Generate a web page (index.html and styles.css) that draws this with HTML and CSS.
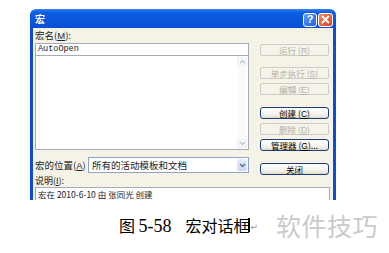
FILE: index.html
```html
<!DOCTYPE html>
<html lang="zh-CN">
<head>
    <meta charset="UTF-8">
    <meta name="viewport" content="width=device-width, initial-scale=1.0">
    <title>宏对话框</title>
    <link rel="stylesheet" href="styles.css">
</head>
<body>
    <div class="dialog">
        <div class="titlebar">
            <span class="title">宏</span>
            <div class="cap-btns">
                <span class="cap-btn help">?</span>
                <span class="cap-btn close">
                    <svg width="9" height="9" viewBox="0 0 9 9"><path d="M1.5 1.5 L7.5 7.5 M7.5 1.5 L1.5 7.5" stroke="#fff" stroke-width="1.8" stroke-linecap="round"/></svg>
                </span>
            </div>
        </div>
        <div class="client">
            <div class="main">
                <div class="left">
                    <div class="label">宏名(<u>M</u>):</div>
                    <div class="name-input">AutoOpen</div>
                    <div class="listbox">
                        <div class="scroll">
                            <span class="arr">
                                <svg width="7" height="5" viewBox="0 0 7 5"><path d="M1 4 L3.5 1.5 L6 4" fill="none" stroke="#b4bccb" stroke-width="1.2"/></svg>
                            </span>
                            <span class="arr">
                                <svg width="7" height="5" viewBox="0 0 7 5"><path d="M1 1 L3.5 3.5 L6 1" fill="none" stroke="#b4bccb" stroke-width="1.2"/></svg>
                            </span>
                        </div>
                    </div>
                    <div class="loc-row">
                        <span class="label">宏的位置(<u>A</u>)</span>
                        <div class="combo">
                            <span class="combo-text">所有的活动模板和文档</span>
                            <span class="combo-btn">
                                <svg width="7" height="5" viewBox="0 0 7 5"><path d="M1 1 L3.5 3.5 L6 1" fill="none" stroke="#4d6a9c" stroke-width="1.4"/></svg>
                            </span>
                        </div>
                    </div>
                </div>
                <div class="buttons">
                    <button class="btn off run">运行 (<u>R</u>)</button>
                    <button class="btn off step">单步执行 (<u>S</u>)</button>
                    <button class="btn off">编辑 (<u>E</u>)</button>
                    <button class="btn on create">创建 (<u>C</u>)</button>
                    <button class="btn off">删除 (<u>D</u>)</button>
                    <button class="btn on">管理器 (<u>G</u>)...</button>
                    <button class="btn on closebtn">关闭</button>
                </div>
            </div>
            <div class="label desc-label">说明(<u>I</u>):</div>
            <div class="desc">宏在 2010-6-10 由 张同光 创建</div>
        </div>
    </div>
    <div class="caption-line">
        <span class="fig">图 <span class="num">5-58</span></span>
        <span class="fig-title">宏对话框</span>
        <span class="cursor"></span>
        <span class="para">↵</span>
        <span class="watermark">软件技巧</span>
    </div>
</body>
</html>
```

FILE: styles.css
```css
* {
    margin: 0;
    padding: 0;
    box-sizing: border-box;
}
body {
    width: 389px;
    height: 253px;
    background-color: #fff;
    font-family: "Noto Sans CJK SC", "DejaVu Sans", sans-serif;
    overflow: hidden;
}
.dialog {
    margin: 9px 0 0 30px;
    width: 306px;
    height: 191px;
    overflow: hidden;
    display: flex;
    flex-direction: column;
}
.titlebar {
    height: 19px;
    flex-shrink: 0;
    display: flex;
    align-items: center;
    justify-content: space-between;
    padding: 0 3px 0 5px;
    border-radius: 6px 6px 0 0;
    background: linear-gradient(#3b86f5 0, #0d5fe3 3px, #0a57dc 55%, #0b4fcf 100%);
}
.title {
    color: #fff;
    font-size: 10px;
    font-weight: bold;
    line-height: 12px;
}
.cap-btns {
    display: flex;
    gap: 1px;
    padding-top: 2px;
}
.cap-btn {
    width: 14px;
    height: 14px;
    border: 1px solid #fff;
    border-radius: 3px;
    display: flex;
    align-items: center;
    justify-content: center;
    color: #fff;
}
.help {
    background: linear-gradient(135deg, #5c97f6, #2663de);
    font-family: "Liberation Sans", sans-serif;
    font-weight: bold;
    font-size: 11px;
    line-height: 1;
}
.close {
    width: 15px;
    background: linear-gradient(135deg, #f08a63, #d9461e);
}
.client {
    flex: 1;
    background-color: #f5f3e7;
    border-left: 3px solid #0b4ed6;
    border-right: 3px solid #0b4ed6;
    padding: 0 3px 0 2px;
    font-size: 9px;
    color: #222;
}
.label {
    height: 12px;
    line-height: 12px;
    margin-top: 1px;
    font-size: 9.5px;
    white-space: nowrap;
}
.label u, .btn u {
    font-family: "Liberation Sans", sans-serif;
}
.main {
    display: flex;
    gap: 11px;
}
.left {
    width: 214px;
    display: flex;
    flex-direction: column;
}
.name-input {
    margin-top: 2px;
    height: 13px;
    border: 1px solid #a5acb5;
    background: #fff;
    font-family: "Liberation Mono", monospace;
    font-size: 8.5px;
    line-height: 11px;
    padding-left: 2px;
}
.listbox {
    height: 94px;
    border: 1px solid #a5acb5;
    border-top: none;
    background: #fff;
    display: flex;
    justify-content: flex-end;
}
.scroll {
    width: 10px;
    margin: 1px 1px 1px 0;
    background: #fbfbf9;
    display: flex;
    flex-direction: column;
    justify-content: space-between;
}
.arr {
    height: 9px;
    display: flex;
    align-items: center;
    justify-content: center;
    border: 1px solid #eceef2;
    border-radius: 2px;
    background: #f7f8fb;
}
.loc-row {
    margin-top: 7px;
    display: flex;
    align-items: center;
    justify-content: space-between;
}
.loc-row .label {
    margin-top: 0;
}
.combo {
    width: 161px;
    height: 16px;
    border: 1px solid #8ea4c6;
    background: #fff;
    display: flex;
    align-items: center;
    justify-content: space-between;
    padding: 0 1px 0 3px;
}
.combo-text {
    font-size: 9.5px;
    line-height: 12px;
}
.combo-btn {
    width: 10px;
    height: 12px;
    border-radius: 2px;
    background: linear-gradient(#e6ecf8, #cdd8ef);
    display: flex;
    align-items: center;
    justify-content: center;
}
.buttons {
    width: 69px;
    padding-top: 16px;
    display: flex;
    flex-direction: column;
    gap: 4px;
}
.btn {
    height: 12px;
    width: 100%;
    font-family: inherit;
    font-size: 8.5px;
    line-height: 10px;
    border-radius: 2px;
    cursor: pointer;
}
.btn.off {
    border: 1px solid #cfcdc1;
    background: #f6f4ea;
    color: #b2b0a4;
}
.btn.on {
    border: 1px solid #1d3f78;
    border-radius: 3px;
    background: linear-gradient(#ffffff, #f1f0ea 70%, #dcd9cc);
    color: #000;
}
.step {
    margin-top: 7px;
}
.create {
    margin-top: 8px;
}
.closebtn {
    margin-top: 8px;
}
.desc-label {
    margin-top: 0;
    height: 11px;
    line-height: 11px;
    font-size: 9px;
}
.desc {
    margin-top: 1px;
    height: 30px;
    border: 1px solid #a5acb5;
    background: #fff;
    font-size: 8.5px;
    line-height: 11px;
    padding: 1px 0 0 2px;
    white-space: nowrap;
}
.caption-line {
    margin-top: 10px;
    height: 30px;
    display: flex;
    align-items: center;
    padding: 0 11px 0 119px;
    font-size: 16px;
    color: #000;
}
.num {
    font-family: "Liberation Serif", serif;
    font-size: 18px;
}
.fig-title {
    margin-left: 14px;
}
.cursor {
    width: 2px;
    height: 14px;
    background: #000;
    margin-left: -2px;
}
.para {
    font-size: 9px;
    color: #999;
    margin-left: 1px;
    padding-top: 3px;
}
.watermark {
    margin-left: auto;
    font-size: 25px;
    color: #cacaca;
    letter-spacing: 0.5px;
}
```
